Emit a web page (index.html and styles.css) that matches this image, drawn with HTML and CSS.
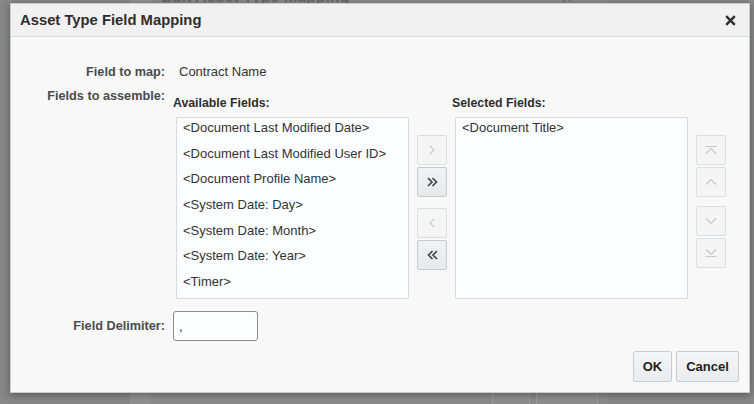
FILE: index.html
```html
<!DOCTYPE html>
<html>
<head>
<meta charset="utf-8">
<title>Asset Type Field Mapping</title>
<link rel="stylesheet" href="styles.css">
</head>
<body>
<div class="under">
  <div class="under-strip"></div>
  <div class="under-panel">
    <div class="under-head">
      <span class="under-title">Edit Asset Type Mapping</span>
      <span class="under-x">×</span>
    </div>
    <div class="under-foot">
      <span class="ub ub-ok"></span>
      <span class="ub ub-cancel"></span>
    </div>
  </div>
</div>

<div class="dialog">
  <div class="header">
    <span class="title">Asset Type Field Mapping</span>
    <svg class="close" width="11" height="11" viewBox="0 0 11 11"><path d="M1.2 1.2 L9.8 9.8 M9.8 1.2 L1.2 9.8" stroke="#2f2f2f" stroke-width="2.4" stroke-linecap="butt"/></svg>
  </div>

  <div class="form">
    <div class="lbl row1">Field to map:</div>
    <div class="val row1">Contract Name</div>

    <div class="lbl row2">Fields to assemble:</div>
    <div class="shuttle">
      <div class="col col-avail">
        <div class="col-head">Available Fields:</div>
        <div class="list">
          <div class="item">&lt;Document Last Modified Date&gt;</div>
          <div class="item">&lt;Document Last Modified User ID&gt;</div>
          <div class="item">&lt;Document Profile Name&gt;</div>
          <div class="item">&lt;System Date: Day&gt;</div>
          <div class="item">&lt;System Date: Month&gt;</div>
          <div class="item">&lt;System Date: Year&gt;</div>
          <div class="item">&lt;Timer&gt;</div>
        </div>
      </div>

      <div class="btns btns-mid">
        <div class="grp">
          <span class="ib off"><svg width="10" height="12" viewBox="0 0 10 12"><path d="M3 2 L7 6 L3 10" fill="none" stroke="#cacaca" stroke-width="1.1"/></svg></span>
          <span class="ib on"><svg width="13" height="12" viewBox="0 0 13 12"><path d="M2 2 L6 6 L2 10 M6.5 2 L10.5 6 L6.5 10" fill="none" stroke="#444" stroke-width="1.7"/></svg></span>
        </div>
        <div class="grp">
          <span class="ib off"><svg width="10" height="12" viewBox="0 0 10 12"><path d="M7 2 L3 6 L7 10" fill="none" stroke="#cacaca" stroke-width="1.1"/></svg></span>
          <span class="ib on"><svg width="13" height="12" viewBox="0 0 13 12"><path d="M6.5 2 L2.5 6 L6.5 10 M11 2 L7 6 L11 10" fill="none" stroke="#444" stroke-width="1.7"/></svg></span>
        </div>
      </div>

      <div class="col col-sel">
        <div class="col-head">Selected Fields:</div>
        <div class="list">
          <div class="item">&lt;Document Title&gt;</div>
        </div>
      </div>

      <div class="btns btns-right">
        <div class="grp">
          <span class="ib off"><svg width="14" height="12" viewBox="0 0 14 12"><path d="M1.5 2.5 H12.5 M2 9.5 L7 4.5 L12 9.5" fill="none" stroke="#c6c6c6" stroke-width="1.1"/></svg></span>
          <span class="ib off"><svg width="14" height="12" viewBox="0 0 14 12"><path d="M2 8.5 L7 3.5 L12 8.5" fill="none" stroke="#c6c6c6" stroke-width="1.1"/></svg></span>
        </div>
        <div class="grp">
          <span class="ib off"><svg width="14" height="12" viewBox="0 0 14 12"><path d="M2 3.5 L7 8.5 L12 3.5" fill="none" stroke="#c6c6c6" stroke-width="1.1"/></svg></span>
          <span class="ib off"><svg width="14" height="12" viewBox="0 0 14 12"><path d="M2 2.5 L7 7.5 L12 2.5 M1.5 9.5 H12.5" fill="none" stroke="#c6c6c6" stroke-width="1.1"/></svg></span>
        </div>
      </div>
    </div>

    <div class="lbl row3">Field Delimiter:</div>
    <div class="val row3"><input class="delim" type="text" value=","></div>
  </div>

  <div class="footer">
    <button class="btn btn-ok">OK</button>
    <button class="btn btn-cancel">Cancel</button>
  </div>
</div>
</body>
</html>
```

FILE: styles.css
```css
* { box-sizing: border-box; }

html, body {
  margin: 0;
  padding: 0;
}

body {
  width: 754px;
  height: 404px;
  overflow: hidden;
  position: relative;
  background: #878787;
  font-family: "Liberation Sans", Arial, Helvetica, sans-serif;
  color: #333;
}

/* dimmed page underneath */
.under {
  position: absolute;
  left: 130px;
  top: 0;
  width: 478px;
  height: 404px;
  display: flex;
}

.under-strip {
  width: 21px;
  background: #919191;
}

.under-panel {
  flex: 1;
  background: #8b8b8b;
  display: flex;
  flex-direction: column;
  justify-content: space-between;
}

.under-head {
  display: flex;
  align-items: flex-start;
  justify-content: space-between;
  padding: 0 36px 0 10px;
  margin-top: -12px;
  color: #6a6a6a;
}

.under-title {
  font-size: 16px;
  font-weight: bold;
}

.under-x {
  font-size: 18px;
}

.under-foot {
  display: flex;
  justify-content: flex-end;
  gap: 6px;
  padding-right: 10px;
  margin-bottom: -18px;
}

.ub {
  height: 30px;
  border: 1px solid #9d9d9d;
  border-radius: 2px;
  background: #8e8e8e;
}

.ub-ok { width: 38px; }
.ub-cancel { width: 62px; }

/* dialog */
.dialog {
  position: absolute;
  left: 10px;
  top: 3px;
  width: 740px;
  height: 390px;
  background: #f8f8f8;
  border: 1px solid #c3ccd5;
  box-shadow: 0 2px 8px rgba(0, 0, 0, 0.35);
  display: flex;
  flex-direction: column;
}

.header {
  height: 33px;
  flex: none;
  background: #f1f1f1;
  border-bottom: 1px solid #d2dbe3;
  display: flex;
  align-items: center;
  justify-content: space-between;
  padding: 0 13px 0 9px;
}

.title {
  font-size: 14.8px;
  font-weight: bold;
  color: #2e2e2e;
}

.close {
  display: block;
  margin-top: 1px;
}

.form {
  display: grid;
  grid-template-columns: 154px auto;
  column-gap: 8px;
  row-gap: 8px;
  padding-top: 27px;
  align-items: start;
}

.lbl {
  text-align: right;
  font-size: 12.7px;
  font-weight: bold;
  color: #4b4b4b;
  line-height: 16px;
}

.val {
  font-size: 13px;
  line-height: 16px;
  color: #333;
}

.val.row1 {
  padding-left: 6px;
}

.shuttle {
  display: flex;
  align-items: flex-start;
  margin-top: 7px;
}

.col-head {
  font-size: 12.3px;
  font-weight: bold;
  color: #2e2e2e;
  line-height: 16px;
  margin-bottom: 6px;
}

.list {
  margin-left: 3px;
  height: 182px;
  background: #fcfdfe;
  border: 1px solid #d6dce1;
  border-radius: 1px;
}

.col-avail .list { width: 233px; }
.col-sel .list { width: 233px; }

.item {
  height: 25.7px;
  line-height: 20px;
  padding-left: 6px;
  font-size: 13px;
  color: #333;
  white-space: nowrap;
}

.btns {
  display: flex;
  flex-direction: column;
  padding-top: 40px;
}

.btns-mid {
  margin-left: 8px;
  margin-right: 5px;
  gap: 11px;
}

.btns-right {
  margin-left: 8px;
  gap: 9px;
}

.grp {
  display: flex;
  flex-direction: column;
  gap: 2px;
}

.ib {
  width: 30px;
  height: 30px;
  border-radius: 2px;
  display: flex;
  align-items: center;
  justify-content: center;
}

.ib svg { display: block; }

.ib.off {
  background: #f5f5f5;
  border: 1px solid #dde0e3;
}

.ib.on {
  background: linear-gradient(#f1f2f4, #e6e8ea);
  border: 1px solid #c4cad0;
}

.lbl.row3 {
  align-self: center;
  margin-top: 4px;
}

.val.row3 {
  margin-top: 4px;
}

.delim {
  display: block;
  width: 85px;
  height: 30px;
  border: 1px solid #8c8c8c;
  border-radius: 3px;
  background: #fcfdfe;
  font-family: "Liberation Sans", Arial, sans-serif;
  font-size: 13px;
  color: #333;
  padding: 0 0 0 5px;
  margin: 0;
}

.footer {
  margin-top: auto;
  display: flex;
  justify-content: flex-end;
  gap: 4px;
  padding: 0 10px 10px 0;
}

.btn {
  height: 31px;
  border: 1px solid #c5ccd3;
  border-radius: 2px;
  background: linear-gradient(#f4f5f7, #e9ebed);
  font-family: "Liberation Sans", Arial, sans-serif;
  font-size: 13px;
  font-weight: bold;
  color: #1f1f1f;
  padding: 0;
  margin: 0;
}

.btn-ok { width: 39px; }
.btn-cancel { width: 63px; }
```
